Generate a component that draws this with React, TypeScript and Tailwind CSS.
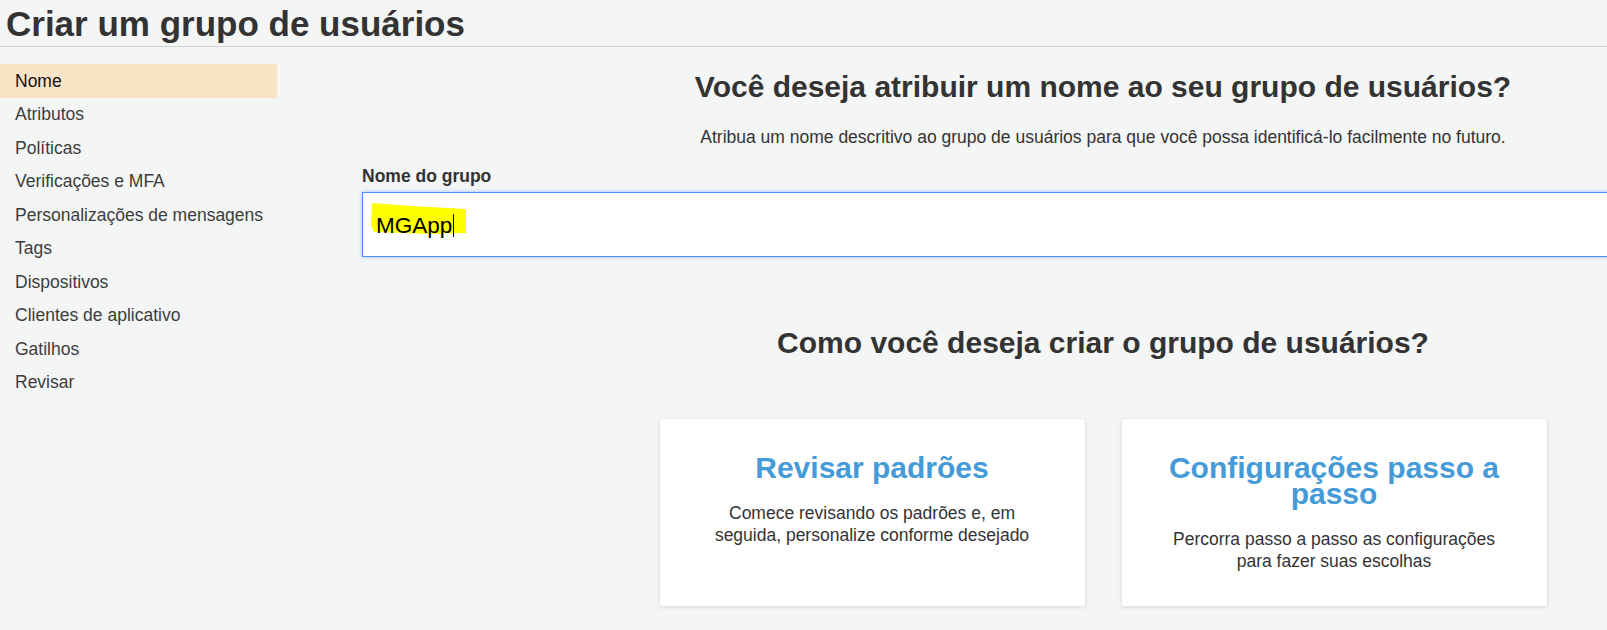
const steps = [
  "Nome",
  "Atributos",
  "Políticas",
  "Verificações e MFA",
  "Personalizações de mensagens",
  "Tags",
  "Dispositivos",
  "Clientes de aplicativo",
  "Gatilhos",
  "Revisar",
];

function Sidebar() {
  return (
    <nav className="w-[362px] shrink-0 pt-[17px]">
      {steps.map((step, i) => (
        <div
          key={step}
          className={
            i === 0
              ? "flex h-[33.5px] w-[277px] items-center bg-[#f9e5c6] pl-[15px] text-[17.5px] text-[#111]"
              : "flex h-[33.5px] w-[277px] items-center pl-[15px] text-[17.5px] text-[#3d3d3d]"
          }
        >
          {step}
        </div>
      ))}
    </nav>
  );
}

function ChoiceCard({ title, text }: { title: string; text: string }) {
  return (
    <div className="h-[187px] w-[425px] rounded-[2px] bg-white px-[42px] pt-[36px] text-center shadow-[0_1px_4px_rgba(0,0,0,0.14)]">
      <h3 className="mb-[21px] text-[30px] font-bold leading-[26px] text-[#459ad8]">{title}</h3>
      <p className="text-[17.5px] leading-[22px] text-[#333]">{text}</p>
    </div>
  );
}

export default function App() {
  return (
    <div className="h-[630px] w-[1607px] overflow-hidden bg-[#f4f5f5] font-['Liberation_Sans',Arial,sans-serif]">
      <header className="border-b border-[#cfd1d1] pb-[2px] pl-[6px] pt-[4px]">
        <h1 className="text-[35px] font-bold leading-[40px] text-[#333]">Criar um grupo de usuários</h1>
      </header>
      <div className="flex">
        <Sidebar />
        <main className="flex w-[1482px] shrink-0 flex-col pt-[23px]">
          <h2 className="text-center text-[30px] font-bold leading-[34px] text-[#333]">
            Você deseja atribuir um nome ao seu grupo de usuários?
          </h2>
          <p className="mt-[23px] text-center text-[17.5px] leading-[20px] text-[#333]">
            Atribua um nome descritivo ao grupo de usuários para que você possa identificá-lo facilmente no futuro.
          </p>
          <label className="mt-[19px] text-[17.5px] font-bold leading-[20px] text-[#333]">Nome do grupo</label>
          <div className="relative mt-[6px] flex h-[65px] items-center border border-[#4d90fe] bg-white pl-[13px] pt-[2px] shadow-[0_0_4px_rgba(77,144,254,0.55)]">
            <svg className="absolute left-[8px] top-[10px]" width="96" height="32" viewBox="0 0 96 32">
              <polygon points="1,0 40,3 95,6 95,30 60,31 3,29 0,22" fill="#ffff00" />
            </svg>
            <span className="relative text-[22.5px] leading-[26px] text-black">MGApp</span>
            <span className="relative ml-px h-[23px] w-px bg-black" />
          </div>
          <h2 className="mt-[69px] text-center text-[30px] font-bold leading-[34px] text-[#333]">
            Como você deseja criar o grupo de usuários?
          </h2>
          <div className="mt-[59px] flex justify-center gap-[37px]">
            <ChoiceCard
              title="Revisar padrões"
              text="Comece revisando os padrões e, em seguida, personalize conforme desejado"
            />
            <ChoiceCard
              title="Configurações passo a passo"
              text="Percorra passo a passo as configurações para fazer suas escolhas"
            />
          </div>
        </main>
      </div>
    </div>
  );
}
